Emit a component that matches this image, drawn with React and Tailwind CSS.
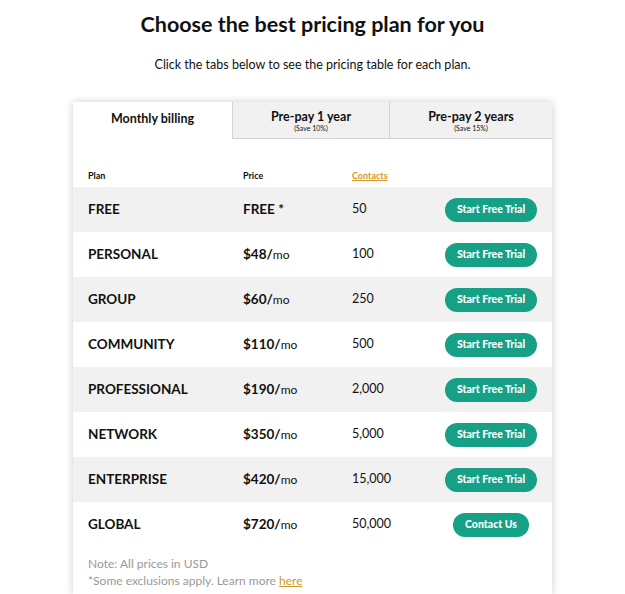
import React from 'react';

const plans = [
  { name: 'FREE', price: 'FREE *', mo: false, contacts: '50', cta: 'Start Free Trial' },
  { name: 'PERSONAL', price: '$48/', mo: true, contacts: '100', cta: 'Start Free Trial' },
  { name: 'GROUP', price: '$60/', mo: true, contacts: '250', cta: 'Start Free Trial' },
  { name: 'COMMUNITY', price: '$110/', mo: true, contacts: '500', cta: 'Start Free Trial' },
  { name: 'PROFESSIONAL', price: '$190/', mo: true, contacts: '2,000', cta: 'Start Free Trial' },
  { name: 'NETWORK', price: '$350/', mo: true, contacts: '5,000', cta: 'Start Free Trial' },
  { name: 'ENTERPRISE', price: '$420/', mo: true, contacts: '15,000', cta: 'Start Free Trial' },
  { name: 'GLOBAL', price: '$720/', mo: true, contacts: '50,000', cta: 'Contact Us' },
];

const App = () => {
  return (
    <div className="min-h-screen bg-white font-['Lato','Liberation_Sans',sans-serif] text-[#111]">
      <h1 className="pt-[10px] text-center text-[21.5px] font-bold leading-[28px]">
        Choose the best pricing plan for you
      </h1>
      <p className="mt-[19px] text-center text-[12.5px] leading-[16px]">
        Click the tabs below to see the pricing table for each plan.
      </p>

      <div className="mx-auto mt-[29px] w-[479px] bg-white shadow-[0_0_8px_rgba(0,0,0,0.2)]">
        {/* tabs */}
        <div className="grid h-[37px] grid-cols-[159px_157px_1fr]">
          <div className="flex items-center justify-center pb-[2px] text-[12.5px] font-bold">Monthly billing</div>
          <div className="flex flex-col items-center justify-center border-b border-l border-[#d4d4d4] bg-[#f1f1f1] pt-[3px]">
            <span className="text-[12.5px] font-bold leading-[14px]">Pre-pay 1 year</span>
            <span className="text-[7px] leading-[9px]">(Save 10%)</span>
          </div>
          <div className="flex flex-col items-center justify-center border-b border-l border-[#d4d4d4] bg-[#f1f1f1] pt-[3px]">
            <span className="text-[12.5px] font-bold leading-[14px]">Pre-pay 2 years</span>
            <span className="text-[7px] leading-[9px]">(Save 15%)</span>
          </div>
        </div>

        {/* table header */}
        <div className="mt-[26px] grid h-[22px] grid-cols-[155px_109px_1fr_94px] items-center px-[15px] text-[9px] font-bold">
          <span>Plan</span>
          <span>Price</span>
          <span className="text-[#d6962a] underline">Contacts</span>
          <span></span>
        </div>

        {plans.map((p, i) => (
          <div
            key={p.name}
            className={`grid h-[45px] grid-cols-[155px_109px_1fr_94px] items-center px-[15px] ${
              i % 2 === 0 ? 'bg-[#f1f1f1]' : 'bg-white'
            }`}
          >
            <span className="text-[13.5px] font-bold">{p.name}</span>
            <span className="text-[13.5px] font-bold">
              {p.price}
              {p.mo && <span className="text-[12px] font-normal">mo</span>}
            </span>
            <span className="text-[12.5px]">{p.contacts}</span>
            <div className="flex justify-center pl-[2px]">
              <button
                className={`h-[24px] rounded-full bg-[#16a085] text-[10.5px] font-black text-white ${
                  p.cta === 'Contact Us' ? 'w-[76px]' : 'w-[93px]'
                }`}
              >
                {p.cta}
              </button>
            </div>
          </div>
        ))}

        <div className="px-[15px] pt-[8px] pb-[6px] text-[12px] leading-[17px] text-[#999]">
          <p>Note: All prices in USD</p>
          <p>
            *Some exclusions apply. Learn more{' '}
            <a href="#" className="text-[#d6962a] underline">here</a>
          </p>
        </div>
      </div>
    </div>
  );
};

export default App;
